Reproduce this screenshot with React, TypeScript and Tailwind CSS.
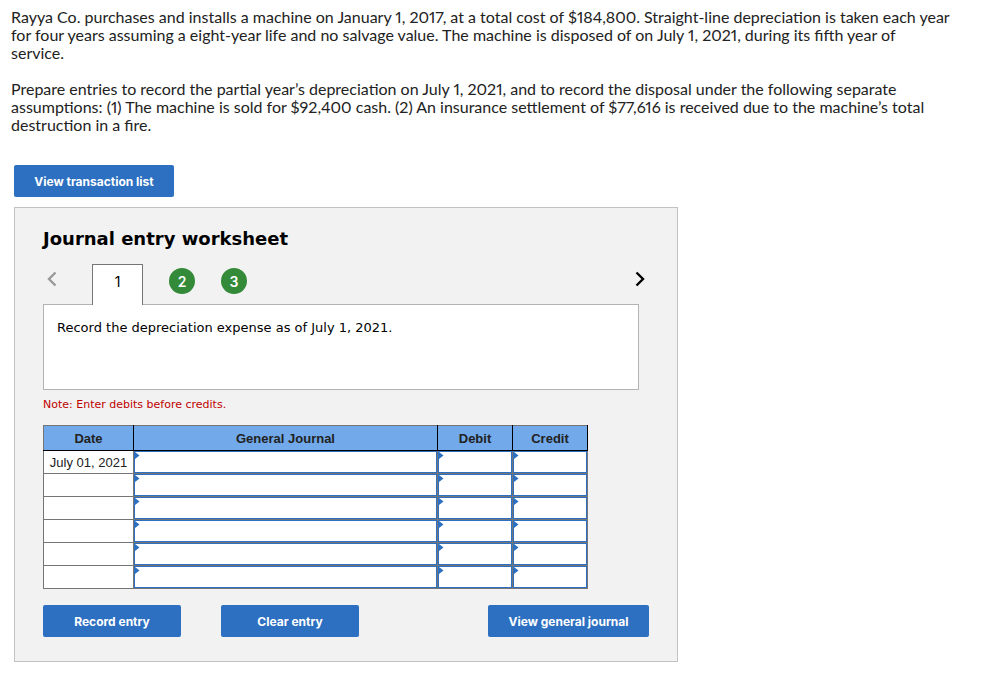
import { useState } from 'react'
import clsx from 'clsx'

const steps = [1, 2, 3]

const rows = ['July 01, 2021', '', '', '', '', '']

const columns = ['General Journal', 'Debit', 'Credit']

interface ActionButtonProps {
  label: string
  className?: string
}

function ActionButton({ label, className }: ActionButtonProps) {
  return (
    <button
      type="button"
      className={clsx(
        "h-8 shrink-0 rounded-[2px] bg-[#2d70c1] pt-[2px] text-center font-['Inter',sans-serif] text-xs font-bold text-white hover:bg-[#2561aa]",
        className
      )}
    >
      {label}
    </button>
  )
}

function Chevron({ direction }: { direction: 'left' | 'right' }) {
  return (
    <svg width="10" height="16" viewBox="0 0 10 16" fill="none" stroke="currentColor" strokeWidth="2.4">
      <path d={direction === 'left' ? 'M8.5 1.5 2 8l6.5 6.5' : 'M1.5 1.5 8 8l-6.5 6.5'} />
    </svg>
  )
}

function EntryCell({ label }: { label: string }) {
  return (
    <td className="relative border border-[#757575] p-0">
      <input
        type="text"
        aria-label={label}
        className="block h-[22px] w-full border border-[#2d70c1] bg-white px-2 text-[13px] outline-none"
      />
      {/* marker for an editable cell */}
      <svg className="pointer-events-none absolute top-px left-0" width="6" height="7" viewBox="0 0 6 7" fill="#2d70c1">
        <path d="M0 0h1L5.5 3.5 1 7H0z" />
      </svg>
    </td>
  )
}

export default function App() {
  const [step, setStep] = useState(1)

  return (
    <main className="min-h-screen bg-white pt-2 pb-4 text-[#222]">
      <div className="max-w-[980px] space-y-[18px] pr-4 pl-[11px] font-['Lato',sans-serif] text-base leading-[18px] proportional-nums">
        <p>
          Rayya Co. purchases and installs a machine on January 1, 2017, at a total cost of $184,800. Straight-line
          depreciation is taken each year
          <br />
          for four years assuming a eight-year life and no salvage value. The machine is disposed of on July 1, 2021,
          during its fifth year of
          <br />
          service.
        </p>
        <p>
          Prepare entries to record the partial year’s depreciation on July 1, 2021, and to record the disposal under
          the following separate
          <br />
          assumptions: (1) The machine is sold for $92,400 cash. (2) An insurance settlement of $77,616 is received due
          to the machine’s total
          <br />
          destruction in a fire.
        </p>
      </div>

      <div className="max-w-[692px] px-[14px] pt-[31px]">
        <ActionButton label="View transaction list" className="w-40" />

        <section className="mt-[10px] border border-[#c2c2c2] bg-[#f2f2f2] px-7 pt-5 pb-6">
          <h1 className="font-['Verdana','DejaVu_Sans',sans-serif] text-lg leading-[22px] font-bold text-black">
            Journal entry worksheet
          </h1>

          <div className="mt-[14px] flex h-10 items-start">
            <button type="button" aria-label="Previous entry" className="mt-[7px] w-[49px] pl-1 text-[#999]">
              <Chevron direction="left" />
            </button>
            <div className="flex h-full items-start gap-[26px]">
              {steps.map((n) =>
                n === step ? (
                  <button
                    key={n}
                    type="button"
                    aria-current="step"
                    className="relative z-10 h-[41px] w-[51px] border border-b-0 border-[#757575] bg-white pb-[6px] font-['Inter',sans-serif] text-sm text-black"
                  >
                    {n}
                  </button>
                ) : (
                  <button
                    key={n}
                    type="button"
                    onClick={() => setStep(n)}
                    className="mt-1 size-[26px] rounded-full bg-[#338a38] pt-[2px] font-['Inter',sans-serif] text-sm font-semibold text-white"
                  >
                    {n}
                  </button>
                )
              )}
            </div>
            <button type="button" aria-label="Next entry" className="mt-[7px] ml-auto pr-1 text-black">
              <Chevron direction="right" />
            </button>
          </div>

          <div className="mr-[10px] h-[86px] border border-[#b3b3b3] bg-white px-[13px] pt-[14px] font-['Verdana','DejaVu_Sans',sans-serif] text-[13px] leading-[18px] text-black">
            Record the depreciation expense as of July 1, 2021.
          </div>

          <p className="mt-[7px] font-['Verdana','DejaVu_Sans',sans-serif] text-[11px] leading-4 text-[#c00000]">
            Note: Enter debits before credits.
          </p>

          <table className="mt-3 w-[545px] table-fixed border-collapse bg-white font-['Liberation_Sans',Arial,sans-serif] text-[13px] leading-4">
            <colgroup>
              <col className="w-[90px]" />
              <col />
              <col className="w-[75px]" />
              <col className="w-[75px]" />
            </colgroup>
            <thead>
              <tr className="h-[25px] bg-[#71a9ea]">
                <th className="border border-t-[#757575] border-r-black border-b-black border-l-[#757575] p-0 pt-[2px] font-bold">
                  Date
                </th>
                {columns.map((column) => (
                  <th key={column} className="border border-black border-t-[#757575] p-0 pt-[2px] font-bold">
                    {column}
                  </th>
                ))}
              </tr>
            </thead>
            <tbody>
              {rows.map((date, i) => (
                <tr key={i}>
                  <td className="border border-[#757575] p-0 pt-[2px] text-center">{date}</td>
                  {columns.map((column) => (
                    <EntryCell key={column} label={`${column}, line ${i + 1}`} />
                  ))}
                </tr>
              ))}
            </tbody>
          </table>

          <div className="mt-4 flex gap-10">
            <ActionButton label="Record entry" className="w-[138px]" />
            <ActionButton label="Clear entry" className="w-[138px]" />
            <ActionButton label="View general journal" className="ml-auto w-[161px]" />
          </div>
        </section>
      </div>
    </main>
  )
}
